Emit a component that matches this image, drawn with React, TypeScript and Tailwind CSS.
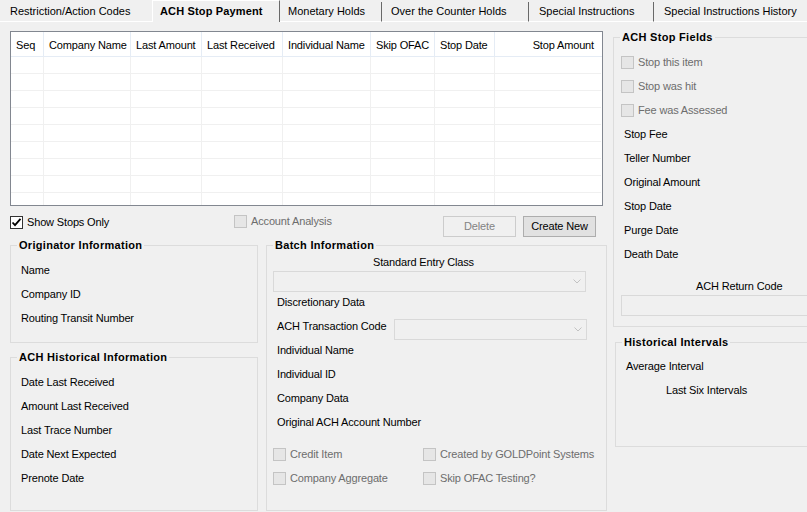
import type { ReactNode } from "react";

const columns = [
  { title: "Seq", w: "w-[33px]" },
  { title: "Company Name", w: "w-[87px]" },
  { title: "Last Amount", w: "w-[71px]" },
  { title: "Last Received", w: "w-[81px]" },
  { title: "Individual Name", w: "w-[88px]" },
  { title: "Skip OFAC", w: "w-[64px]" },
  { title: "Stop Date", w: "w-[60px]" },
];

function CheckBox({
  label,
  checked = false,
  disabled = false,
}: {
  label: string;
  checked?: boolean;
  disabled?: boolean;
}) {
  return (
    <div className="flex items-center">
      <span
        className={
          disabled
            ? "flex h-[13px] w-[13px] shrink-0 border border-[#c4c4c4] bg-[#e6e6e6]"
            : "flex h-[13px] w-[13px] shrink-0 items-center justify-center border border-[#333333] bg-white"
        }
      >
        {checked && (
          <svg width="11" height="11" viewBox="0 0 11 11">
            <path d="M1.5 5.5 L4 8.2 L9.5 1.8" fill="none" stroke="#000" strokeWidth="1.8" />
          </svg>
        )}
      </span>
      <span className={`ml-[4px] whitespace-nowrap ${disabled ? "text-[#6d6d6d]" : ""}`}>{label}</span>
    </div>
  );
}

function GroupBox({ title, className, children }: { title: string; className: string; children?: ReactNode }) {
  return (
    <fieldset className={`border border-[#dcdcdc] ${className}`}>
      <legend className="ml-[6px] px-[2px] font-bold leading-[13px] tracking-[0.3px] whitespace-nowrap">{title}</legend>
      {children}
    </fieldset>
  );
}

function Row({ children, className = "" }: { children: ReactNode; className?: string }) {
  return <div className={`flex h-[24px] items-center whitespace-nowrap ${className}`}>{children}</div>;
}

function Combo({ className }: { className: string }) {
  return (
    <div className={`flex h-[21px] items-center justify-end border border-[#d9d9d9] bg-[#f0f0f0] pr-[4px] ${className}`}>
      <svg width="8" height="5" viewBox="0 0 8 5">
        <polyline points="0.5,0.5 4,4 7.5,0.5" fill="none" stroke="#c2c2c2" strokeWidth="1" />
      </svg>
    </div>
  );
}

function Tab({ label, className }: { label: string; className: string }) {
  return (
    <div className={`flex h-[20px] items-center whitespace-nowrap border-b border-b-white ${className}`}>{label}</div>
  );
}

export default function App() {
  return (
    <div className="h-[512px] w-[807px] overflow-hidden bg-[#f0f0f0] font-['Liberation_Sans',Arial,sans-serif] text-[11px] leading-[13px] tracking-[-0.15px] text-black">
      {/* tab strip */}
      <div className="flex h-[22px] items-end tracking-normal">
        <Tab label="Restriction/Action Codes" className="w-[152px] pl-[10px]" />
        <div className="flex h-[22px] w-[128px] items-center whitespace-nowrap border-l border-t border-r border-l-white border-t-white border-r-[#696969] pl-[7px] pb-[1px] font-bold tracking-[0.15px]">
          ACH Stop Payment
        </div>
        <Tab label="Monetary Holds" className="w-[102px] border-r border-r-[#696969] pl-[8px]" />
        <Tab label="Over the Counter Holds" className="w-[147px] border-r border-r-[#696969] pl-[9px]" />
        <Tab label="Special Instructions" className="w-[125px] border-r border-r-[#696969] pl-[10px]" />
        <Tab label="Special Instructions History" className="flex-1 pl-[10px]" />
      </div>

      <div className="flex">
        {/* left column */}
        <div className="ml-[10px] w-[597px] shrink-0">
          <div className="mt-[9px] h-[175px] w-[593px] overflow-hidden border border-[#828790] bg-white">
            <div className="flex h-[25px] border-b border-b-[#e5ecf5]">
              {columns.map((c) => (
                <div key={c.title} className={`${c.w} flex shrink-0 items-center border-r border-r-[#e5ecf5] pl-[5px] pt-[2px] whitespace-nowrap`}>
                  {c.title}
                </div>
              ))}
              <div className="flex w-[106px] shrink-0 items-center justify-end pr-[7px] pt-[2px] whitespace-nowrap">Stop Amount</div>
            </div>
            {Array.from({ length: 9 }).map((_, i) => (
              <div key={i} className="flex h-[17px] w-[590px] border-b border-b-[#f0f0f0]">
                {columns.map((c) => (
                  <div key={c.title} className={`${c.w} shrink-0 border-r border-r-[#f0f0f0]`} />
                ))}
                <div className="w-[106px] shrink-0" />
              </div>
            ))}
          </div>

          <div className="mt-[9px] flex h-[22px] items-start">
            <div className="mt-[1px] w-[224px]">
              <CheckBox label="Show Stops Only" checked />
            </div>
            <div className="w-[209px]">
              <CheckBox label="Account Analysis" disabled />
            </div>
            <div className="mt-[1px] flex h-[21px] w-[73px] items-center justify-center border border-[#cccccc] bg-[#f0f0f0] text-[#838383]">
              Delete
            </div>
            <div className="ml-[7px] mt-[1px] flex h-[21px] w-[73px] items-center justify-center border border-[#adadad] bg-[#e1e1e1]">
              Create New
            </div>
          </div>

          <div className="mt-[2px] flex">
            <div className="w-[248px] shrink-0">
              <GroupBox title="Originator Information" className="h-[104px]">
                <div className="mt-[6px] pl-[10px]">
                  <Row>Name</Row>
                  <Row>Company ID</Row>
                  <Row>Routing Transit Number</Row>
                </div>
              </GroupBox>
              <GroupBox title="ACH Historical Information" className="mt-[8px] h-[160px]">
                <div className="mt-[6px] pl-[10px]">
                  <Row>Date Last Received</Row>
                  <Row>Amount Last Received</Row>
                  <Row>Last Trace Number</Row>
                  <Row>Date Next Expected</Row>
                  <Row>Prenote Date</Row>
                </div>
              </GroupBox>
            </div>

            <GroupBox title="Batch Information" className="ml-[8px] h-[272px] w-[341px] shrink-0">
              <div className="mt-[2px] h-[16px] pl-[106px] leading-[16px] whitespace-nowrap">Standard Entry Class</div>
              <Combo className="ml-[6px] mt-[1px] w-[313px]" />
              <div className="mt-[2px] h-[16px] pl-[10px] leading-[16px]">Discretionary Data</div>
              <div className="mt-[9px] flex h-[21px] items-start pl-[10px]">
                <div className="mt-[1px] w-[117px] shrink-0 whitespace-nowrap">ACH Transaction Code</div>
                <Combo className="w-[193px]" />
              </div>
              <div className="-mt-[2px] pl-[10px]">
                <Row>Individual Name</Row>
                <Row>Individual ID</Row>
                <Row>Company Data</Row>
                <Row>Original ACH Account Number</Row>
              </div>
              <div className="mt-[8px] grid grid-cols-[150px_1fr] pl-[6px]">
                <Row><CheckBox label="Credit Item" disabled /></Row>
                <Row><CheckBox label="Created by GOLDPoint Systems" disabled /></Row>
                <Row><CheckBox label="Company Aggregate" disabled /></Row>
                <Row><CheckBox label="Skip OFAC Testing?" disabled /></Row>
              </div>
            </GroupBox>
          </div>
        </div>

        {/* right column */}
        <div className="ml-[6px] shrink-0">
          <GroupBox title="ACH Stop Fields" className="mt-[9px] h-[296px] w-[200px]">
            <div className="mt-[6px] pl-[7px]">
              <Row><CheckBox label="Stop this item" disabled /></Row>
              <Row><CheckBox label="Stop was hit" disabled /></Row>
              <Row><CheckBox label="Fee was Assessed" disabled /></Row>
            </div>
            <div className="pl-[10px]">
              <Row>Stop Fee</Row>
              <Row>Teller Number</Row>
              <Row>Original Amount</Row>
              <Row>Stop Date</Row>
              <Row>Purge Date</Row>
              <Row>Death Date</Row>
            </div>
            <div className="mt-[12px] h-[16px] pl-[82px] leading-[16px] whitespace-nowrap">ACH Return Code</div>
            <div className="ml-[7px] mt-[1px] h-[21px] w-[200px] border border-[#d9d9d9] bg-[#f0f0f0]" />
          </GroupBox>
          <GroupBox title="Historical Intervals" className="ml-[2px] mt-[9px] h-[111px] w-[200px]">
            <div className="mt-[5px]">
              <Row className="pl-[10px]">Average Interval</Row>
              <Row className="pl-[50px]">Last Six Intervals</Row>
            </div>
          </GroupBox>
        </div>
      </div>
    </div>
  );
}
